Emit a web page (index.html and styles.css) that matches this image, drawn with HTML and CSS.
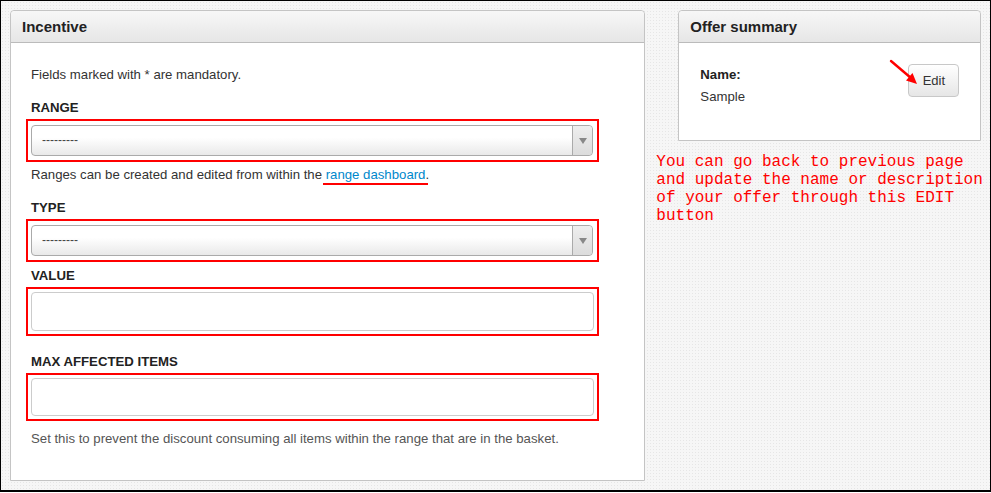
FILE: index.html
```html
<!DOCTYPE html>
<html lang="en">
<head>
    <meta charset="UTF-8">
    <title>Incentive</title>
    <link rel="stylesheet" href="styles.css">
</head>
<body>
    <div class="frame">
        <div class="panel incentive">
            <div class="panel-head"><h3>Incentive</h3></div>
            <div class="panel-body">
                <p class="intro">Fields marked with * are mandatory.</p>

                <label class="field-label">RANGE</label>
                <div class="hl">
                    <div class="select"><span>---------</span><i class="arrow"></i></div>
                </div>
                <p class="help">Ranges can be created and edited from within the <span class="mark"><a href="#">range dashboard</a></span>.</p>

                <label class="field-label">TYPE</label>
                <div class="hl">
                    <div class="select"><span>---------</span><i class="arrow"></i></div>
                </div>

                <label class="field-label tight">VALUE</label>
                <div class="hl hl-input">
                    <input type="text" class="text-input">
                </div>

                <label class="field-label gap">MAX AFFECTED ITEMS</label>
                <div class="hl hl-input">
                    <input type="text" class="text-input tall">
                </div>
                <p class="help muted">Set this to prevent the discount consuming all items within the range that are in the basket.</p>
            </div>
        </div>

        <div class="side">
            <div class="panel summary">
                <div class="panel-head"><h3>Offer summary</h3></div>
                <div class="panel-body summary-body">
                    <div>
                        <div class="name-label">Name:</div>
                        <div class="name-value">Sample</div>
                    </div>
                    <button class="btn">Edit</button>
                    <svg class="pointer" width="34" height="30" viewBox="0 0 34 30">
                        <line x1="2" y1="2" x2="22" y2="19" stroke="#f00" stroke-width="2.4" stroke-linecap="round"/>
                        <polygon points="28,25 17,21.5 23.5,14" fill="#f00"/>
                    </svg>
                </div>
            </div>
            <p class="note">You can go back to previous page and update the name or description of your offer through this EDIT button</p>
        </div>
    </div>
</body>
</html>
```

FILE: styles.css
```css
* {
    box-sizing: border-box;
}
body {
    margin: 0;
    font-family: "Liberation Sans", Arial, sans-serif;
    font-size: 13.2px;
    color: #333;
}
.frame {
    width: 991px;
    height: 492px;
    border: 1px solid #000;
    border-bottom-width: 2px;
    padding: 9px 0 0 9px;
    display: flex;
    background-color: #f6f6f6;
    background-image: radial-gradient(circle, #e6e6e6 0.8px, transparent 1px);
    background-size: 3px 3px;
}
.panel {
    background: #fff;
    border: 1px solid #c4c4c4;
    border-radius: 4px 4px 0 0;
}
.panel-head {
    height: 32px;
    padding: 0 11px;
    background: linear-gradient(#f7f7f7, #e6e6e6);
    border-bottom: 1px solid #bbb;
    border-radius: 4px 4px 0 0;
}
.panel-head h3 {
    margin: 0;
    font-size: 15px;
    line-height: 31px;
    color: #222;
}
.incentive {
    width: 636px;
    height: 471px;
}
.incentive .panel-body {
    padding: 23px 20px 0;
}
.intro {
    margin: 0;
    line-height: 18px;
}
.field-label {
    display: block;
    margin-top: 15px;
    font-weight: bold;
    line-height: 18px;
    color: #222;
}
.field-label.tight {
    margin-top: 5px;
}
.field-label.gap {
    margin-top: 17px;
}
.hl {
    width: 573px;
    margin: 2px 0 0 -5px;
    padding: 4px 5px 4px 3px;
    border: 2px solid #f00;
}
.hl-input {
    padding: 3px 4px 3px 3px;
}
.select {
    position: relative;
    width: 562px;
    height: 31px;
    padding-left: 10px;
    border: 1px solid #aaa;
    border-radius: 4px;
    background: linear-gradient(#fff 40%, #e9e9e9);
    line-height: 29px;
    font-size: 12px;
    color: #444;
}
.arrow {
    position: absolute;
    top: 0;
    right: 0;
    width: 20px;
    height: 29px;
    border-left: 1px solid #aaa;
    border-radius: 0 4px 4px 0;
    background: linear-gradient(#eee, #dcdcdc);
}
.arrow::after {
    content: "";
    position: absolute;
    top: 12px;
    left: 6px;
    border-left: 4px solid transparent;
    border-right: 4px solid transparent;
    border-top: 6px solid #888;
}
.text-input {
    display: block;
    width: 563px;
    height: 39px;
    margin: 0;
    border: 1px solid #ccc;
    border-radius: 4px;
    background: #fff;
    font: inherit;
}
.text-input.tall {
    height: 38px;
}
.help {
    margin: 4px 0 0;
    line-height: 18px;
}
.help.muted {
    margin-top: 9px;
    color: #555;
}
.mark {
    margin: 0 -3px;
    padding: 0 3px 1px;
    border-bottom: 2px solid #f00;
}
a {
    color: #0088cc;
    text-decoration: none;
}
.side {
    margin-left: 11px;
    width: 334px;
}
.summary {
    width: 303px;
    height: 131px;
    margin-left: 22px;
}
.summary-body {
    position: relative;
    display: flex;
    justify-content: space-between;
    align-items: flex-start;
    padding: 21px 21px 0;
}
.name-label {
    margin-top: 2px;
    font-weight: bold;
    line-height: 18px;
    color: #222;
}
.name-value {
    margin-top: 4px;
    line-height: 18px;
}
.btn {
    width: 51px;
    height: 33px;
    padding: 0;
    border: 1px solid #c8c8c8;
    border-radius: 4px;
    background: linear-gradient(#fff, #e6e6e6);
    font-family: inherit;
    font-size: 13px;
    color: #333;
    cursor: pointer;
}
.pointer {
    position: absolute;
    top: 16px;
    left: 210px;
}
.note {
    margin: 12px 0 0;
    font-family: "Liberation Mono", "Courier New", monospace;
    font-size: 16px;
    line-height: 18px;
    color: #f00;
}
```
